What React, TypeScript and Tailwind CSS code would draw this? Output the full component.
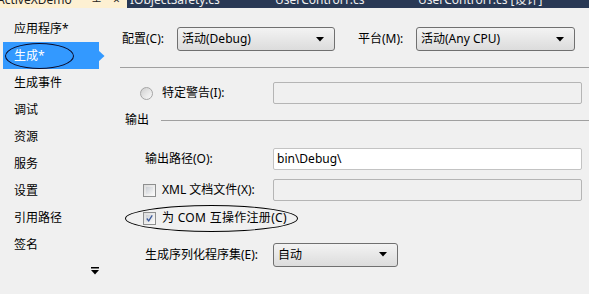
import React from "react";

const font = { fontFamily: '"Noto Sans", "Noto Sans CJK SC", sans-serif' };

function Dropdown({ w, text }: { w: string; text: string }) {
  return (
    <div
      className={`${w} h-[24px] rounded-[3px] border border-[#707070] bg-gradient-to-b from-[#f3f3f3] to-[#dcdcdc] flex items-center justify-between pl-[4px] pr-[10px] text-[12px] text-black`}
    >
      <span>{text}</span>
      <svg width="8" height="5" viewBox="0 0 8 5">
        <path d="M0 0 L8 0 L4 4.5 Z" fill="#000" />
      </svg>
    </div>
  );
}

function Checkbox({ checked }: { checked?: boolean }) {
  return (
    <div className="w-[13px] h-[13px] border border-[#8e8f8f] bg-gradient-to-br from-[#dcdcdc] to-[#fbfbfb] p-[2px] flex items-center justify-center">
      <div className="w-full h-full bg-gradient-to-br from-[#cbcfd5] to-[#f6f6f6] flex items-center justify-center">
        {checked && (
          <svg width="9" height="9" viewBox="0 0 9 9">
            <path d="M1 4.5 L3.5 7.5 L8 0.5" stroke="#3c5a9a" strokeWidth="1.6" fill="none" />
          </svg>
        )}
      </div>
    </div>
  );
}

export default function App() {
  const items = ["应用程序*", "生成*", "生成事件", "调试", "资源", "服务", "设置", "引用路径", "签名"];
  return (
    <div className="w-[589px] h-[294px] bg-[#f0f0f0] overflow-hidden text-black" style={font}>
      {/* top tab strip */}
      <div className="h-[8px] overflow-hidden flex bg-[#293955]">
        <div className="w-[127px] h-[8px] bg-[#fdf0d2] relative text-[12px] leading-[16px] text-[#1e1e1e]">
          <span className="absolute left-[-3px] top-[-8px]">ActiveXDemo</span>
          <span className="absolute left-[92px] top-[-8px] text-[10px]">ㅗ</span>
          <span className="absolute left-[113px] top-[-8px]">×</span>
        </div>
        <div className="flex-1 relative text-[12px] leading-[16px] text-[#f0f0f0]">
          <span className="absolute left-[3px] top-[-8px]">IObjectSafety.cs</span>
          <span className="absolute left-[148px] top-[-8px]">UserControl1.cs</span>
          <span className="absolute left-[291px] top-[-8px]">UserControl1.cs [设计]</span>
        </div>
      </div>

      <div className="flex">
        {/* sidebar */}
        <div className="w-[120px] shrink-0 pt-[7px] text-[12px] relative">
          {items.map((t, i) => (
            <div key={t} className="h-[27px] relative flex items-center">
              {i === 1 ? (
                <div className="absolute left-[3px] top-0 w-[96px] h-[27px] bg-[#3399ff] flex items-center">
                  <span className="pl-[11px] text-white">{t}</span>
                  <svg className="absolute left-[95px] top-[8px]" width="7" height="12" viewBox="0 0 7 12">
                    <path d="M0 0 L6.5 6 L0 12 Z" fill="#3399ff" />
                  </svg>
                  <div className="absolute left-[2px] top-[1px] w-[69px] h-[26px] rounded-[50%] border border-[#0b0b2a]" />
                </div>
              ) : (
                <span className="pl-[14px]">{t}</span>
              )}
            </div>
          ))}
          <div className="h-[26px] flex items-center pl-[91px]">
            <svg width="8" height="8" viewBox="0 0 8 8">
              <rect x="0" y="0" width="8" height="1.5" fill="#000" />
              <path d="M0 3 L8 3 L4 7.5 Z" fill="#000" />
            </svg>
          </div>
        </div>

        {/* main */}
        <div className="flex-1 text-[12px]">
          <div className="h-[19px]" />
          <div className="flex items-center h-[24px]">
            <span className="w-[57px] pl-[2px]">配置(C):</span>
            <Dropdown w="w-[158px]" text="活动(Debug)" />
            <span className="ml-[23px] w-[58px]">平台(M):</span>
            <Dropdown w="w-[159px]" text="活动(Any CPU)" />
          </div>
          <div className="h-[16px]" />
          <div className="h-px bg-[#a0a0a0]" />

          <div className="h-[14px]" />
          <div className="flex items-center h-[22px]">
            <div className="w-[26px] pl-[20px]">
              <div className="w-[13px] h-[13px] rounded-full border border-[#a5a5a5] bg-gradient-to-br from-[#cfcfcf] to-[#fafafa] flex items-center justify-center">
                <div className="w-[7px] h-[7px] rounded-full bg-gradient-to-br from-[#d8d8d8] to-[#f4f4f4]" />
              </div>
            </div>
            <span className="w-[127px] pl-[16px]">特定警告(I):</span>
            <div className="w-[309px] h-[22px] rounded-[2px] border border-[#b5b5b5]" />
          </div>

          <div className="h-[8px]" />
          <div className="flex items-center h-[16px]">
            <span className="pl-[5px]">输出</span>
            <div className="ml-[12px] flex-1 h-px bg-[#a0a0a0]" />
          </div>

          <div className="h-[20px]" />
          <div className="flex items-center h-[22px]">
            <span className="w-[153px] pl-[25px]">输出路径(O):</span>
            <div className="w-[309px] h-[22px] rounded-[2px] border border-[#c3c3c3] bg-white flex items-center pl-[3px]">
              bin\Debug\
            </div>
          </div>

          <div className="h-[9px]" />
          <div className="flex items-center h-[22px]">
            <div className="w-[42px] pl-[23px]">
              <Checkbox />
            </div>
            <span className="w-[111px]">XML 文档文件(X):</span>
            <div className="w-[309px] h-[22px] rounded-[2px] border border-[#b5b5b5]" />
          </div>

          <div className="h-[6px]" />
          <div className="flex items-center h-[22px] relative">
            <div className="w-[42px] pl-[23px]">
              <Checkbox checked />
            </div>
            <span className="tracking-[0.3px]">为 COM 互操作注册(C)</span>
            <div className="absolute left-[5px] top-[-2px] w-[173px] h-[27px] rounded-[50%] border border-black" />
          </div>

          <div className="h-[13px]" />
          <div className="flex items-center h-[25px]">
            <span className="w-[153px] pl-[25px]">生成序列化程序集(E):</span>
            <Dropdown w="w-[125px]" text="自动" />
          </div>
        </div>
      </div>
    </div>
  );
}
